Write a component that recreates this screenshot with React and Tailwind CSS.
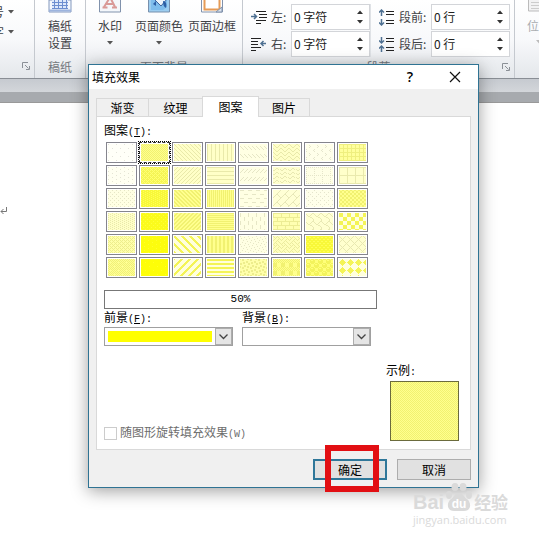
import React, { useState } from "react";

const PATTERNS = [
  ["5%", "8000000008000000"],
  ["50%", "55aa55aa55aa55aa"],
  ["浅色下对角线", "8844221188442211"],
  ["浅色竖线", "8888888888888888"],
  ["下对角虚线", "0000884422110000"],
  ["之字形", "8142241881422418"],
  ["草皮", "0010081000800180"],
  ["小网格", "ff888888ff888888"],
  ["10%", "8000080080000800"],
  ["60%", "77aaddaa77aaddaa"],
  ["浅色上对角线", "1122448811224488"],
  ["浅色横线", "ff000000ff000000"],
  ["上对角虚线", "0000112244880000"],
  ["波浪线", "001825c0001825c0"],
  ["虚线网格", "aa00800080008000"],
  ["大网格", "ff80808080808080"],
  ["20%", "8800220088002200"],
  ["70%", "77dd77dd77dd77dd"],
  ["深色下对角线", "cc663399cc663399"],
  ["窄竖线", "aaaaaaaaaaaaaaaa"],
  ["横虚线", "f00000000f000000"],
  ["对角砖形", "0102040818244281"],
  ["点式菱形", "8000220008002200"],
  ["小棋盘", "9966669999666699"],
  ["25%", "8822882288228822"],
  ["75%", "77ffddff77ffddff"],
  ["深色上对角线", "3366cc993366cc99"],
  ["窄横线", "ff00ff00ff00ff00"],
  ["竖虚线", "8080808008080808"],
  ["横向砖形", "ff808080ff080808"],
  ["瓦形", "038448300c020101"],
  ["大棋盘", "f0f0f0f00f0f0f0f", true],
  ["30%", "aa44aa11aa44aa11"],
  ["80%", "feffeffffeffefff"],
  ["宽下对角线", "c1e070381c0e0783", true],
  ["深色竖线", "cccccccccccccccc"],
  ["小纸屑", "8008400210012004"],
  ["编织物", "8854224588142251"],
  ["棚架", "ff66ff99ff66ff99"],
  ["轮廓式菱形", "8244281028448201"],
  ["40%", "55aa558a55aa55a8"],
  ["90%", "fffffff7ffffff7f"],
  ["宽上对角线", "83070e1c3870e0c1", true],
  ["深色横线", "ffff0000ffff0000", true],
  ["大纸屑", "b130031bd8c00c8d"],
  ["苏格兰方格呢", "aa55aa55f0f0f0f0"],
  ["球体", "77898f8f7798f8f8"],
  ["实心菱形", "10387cfe7c381000", true],
];

// Paints an 8x8 bitmap over the whole area; denser bitmaps get stronger inks.
function Hatch({ bits, width, height, bold }) {
  const rows = [];
  let count = 0;
  for (let y = 0; y < 8; y++) {
    const row = parseInt(bits.slice(y * 2, y * 2 + 2), 16);
    rows.push(row);
    for (let x = 0; x < 8; x++) if (row & (128 >> x)) count++;
  }
  const density = count / 64;
  const ink = bold ? 0.62 : density;
  const paper = bold ? 0.15 : density;
  const level = Math.round(226 + 29 * ink);
  let path = "";
  for (let y = 0; y < height; y++) {
    for (let x = 0; x < width; x++) {
      if (rows[y % 8] & (128 >> x % 8)) path += `M${x} ${y}h1v1h-1z`;
    }
  }
  return (
    <svg width={width} height={height} className="block" aria-hidden="true" shapeRendering="crispEdges">
      <rect width={width} height={height} fill={`rgb(255,255,${Math.round(255 - 226 * paper)})`} />
      <path d={path} fill={`rgb(${level},${level},${Math.round(226 - 226 * ink)})`} />
    </svg>
  );
}

function Caret({ className = "text-[#555]" }) {
  return (
    <svg width="6" height="4" viewBox="0 0 6 4" className={className} aria-hidden="true">
      <path d="M0 0h6L3 3.5z" fill="currentColor" />
    </svg>
  );
}

function Launcher() {
  return (
    <button aria-label="展开对话框" className="text-[#8b9097]">
      <svg width="8" height="8" viewBox="0 0 8 8" fill="none" stroke="currentColor">
        <path d="M.5 6V.5H6M3 3l3.500 3.500M7.500 4v3.500H4" />
      </svg>
    </button>
  );
}

function GridPaperIcon() {
  return (
    <svg width="24" height="13" viewBox="0 0 24 13" aria-hidden="true">
      <path d="M1 0h22v12H1z" fill="#f3f7fd" stroke="#8398bd" />
      <path d="M4 0h16v8H4z" fill="#dce8fb" />
      <path d="M4 2.500h16M4 5.500h16M4 8.500h16M6.500 0v9M10.500 0v9M14.500 0v9M18.500 0v9" stroke="#6c8ed0" />
      <path d="M1 10.500h22" stroke="#9db4de" strokeWidth="2" />
    </svg>
  );
}

function WatermarkIcon() {
  return (
    <svg width="22" height="13" viewBox="0 0 22 13" aria-hidden="true">
      <path d="M.5-1h21v13H.5z" fill="#f4f7fb" stroke="#8192ac" />
      <path d="M5 7L10-1h2l4 8M7 4h7M3.500 7.500h5M13 7.500h5" fill="none" stroke="#d99a98" strokeWidth="2" />
    </svg>
  );
}

function PageColorIcon() {
  return (
    <svg width="22" height="13" viewBox="0 0 22 13" aria-hidden="true">
      <path d="M.5-1h21v13H.5z" fill="#9ccdf0" stroke="#7890ad" />
      <path d="M3 0h16v7l-4 3H3z" fill="#7fbdec" />
      <path d="M6-1l7 7 6-7z" fill="#edf4fb" stroke="#40659c" />
      <path d="M15 1c3 0 4 3 3 7-2-1-3-3-3-7zM5 4l3-3v5z" fill="#2d5fa5" />
    </svg>
  );
}

function PageBorderIcon() {
  return (
    <svg width="22" height="13" viewBox="0 0 22 13" aria-hidden="true">
      <path d="M.5-1h21v13H.5z" fill="#fff" stroke="#8192ac" />
      <path d="M3.500-1v10.500h15V-1" fill="none" stroke="#e69b57" strokeWidth="2" />
      <path d="M15 12l6-5v5z" fill="#dce4ef" stroke="#8192ac" />
    </svg>
  );
}

function IndentIcon({ flip }) {
  return (
    <svg width="16" height="14" viewBox="0 0 16 14" fill="none" aria-hidden="true">
      {flip ? (
        <>
          <path d="M0 1.500h10M0 4.500h7M0 7.500h7M0 10.500h10M0 13.500h5" stroke="#222" />
          <path d="M15 6.500h-5M12.500 4L10 6.500 12.500 9" stroke="#4e7092" strokeWidth="1.500" />
        </>
      ) : (
        <>
          <path d="M5 1.500h10M8 4.500h8M8 7.500h8M5 10.500h10M5 13.500h5" stroke="#222" />
          <path d="M0 6.500h5M3 4l2.500 2.500L3 9" stroke="#4e7092" strokeWidth="1.500" />
        </>
      )}
    </svg>
  );
}

function SpacingIcon({ flip }) {
  return (
    <svg width="16" height="17" viewBox="0 0 16 17" fill="none" aria-hidden="true">
      <path d="M7 2.500h8M7 5.500h8M7 11.500h8M7 14.500h8" stroke="#222" />
      {flip ? (
        <path d="M2.500 1v6M0 4.500L2.500 7 5 4.500M2.500 16v-6M0 12.500L2.500 10 5 12.500" stroke="#4e7092" strokeWidth="1.500" />
      ) : (
        <path d="M2.500 7V1M0 3.500L2.500 1 5 3.500M2.500 10v6M0 13.500L2.500 16 5 13.500" stroke="#4e7092" strokeWidth="1.500" />
      )}
    </svg>
  );
}

function Spinner({ id, label, value, icon, wide }) {
  return (
    <div className="flex h-[26px] items-center">
      {icon}
      <label htmlFor={id} className={wide ? "ml-1 w-8 whitespace-nowrap" : "ml-1 w-5 whitespace-nowrap"}>
        {label}
      </label>
      <div className="flex h-[26px] w-[79px] border border-[#d3d5d9] bg-white">
        <input id={id} defaultValue={value} className="w-0 min-w-0 flex-1 bg-transparent pl-0.5 text-[#222] outline-none" />
        <div className="flex w-[18px] flex-col items-center justify-evenly">
          <button aria-label="增加" className="rotate-180"><Caret className="text-[#333]" /></button>
          <button aria-label="减少"><Caret className="text-[#333]" /></button>
        </div>
      </div>
    </div>
  );
}

function RibbonButton({ icon, label }) {
  return (
    <button className="flex flex-col items-center">
      {icon}
      <span className="mt-1 leading-[17px]">{label}</span>
      <span className="flex h-[17px] items-center"><Caret /></span>
    </button>
  );
}

function Ribbon() {
  return (
    <header className="flex overflow-hidden border-b border-[#898e95] bg-linear-to-b from-white via-[#f8f9fb] to-[#e4e7eb] text-xs leading-4 text-[#3f4246]">
      <section className="flex w-[35px] shrink-0 flex-col border-r border-[#c5c9cf]">
        <div className="-ml-2 flex items-center gap-1 pt-1"><span>号</span><Caret /></div>
        <div className="-ml-2 mt-1 flex items-center gap-1"><span>字</span><Caret /></div>
        <div className="mt-auto flex justify-end pr-1 pb-2"><Launcher /></div>
      </section>
      <section className="flex w-[51px] shrink-0 flex-col items-center border-r border-[#c5c9cf] pb-[3px]">
        <button className="flex flex-col items-center">
          <GridPaperIcon />
          <span className="mt-1 w-6 leading-[17px]">稿纸设置</span>
        </button>
        <div className="mt-2 text-[#75797e]">稿纸</div>
      </section>
      <section className="flex w-[157px] shrink-0 flex-col items-center border-r border-[#c5c9cf] pb-[3px]">
        <div className="flex w-full justify-between pr-1.5 pl-3">
          <RibbonButton icon={<WatermarkIcon />} label="水印" />
          <div className="flex gap-[5px]">
            <RibbonButton icon={<PageColorIcon />} label="页面颜色" />
            <button className="flex flex-col items-center">
              <PageBorderIcon />
              <span className="mt-1 leading-[17px]">页面边框</span>
            </button>
          </div>
        </div>
        <div className="mt-2 text-[#75797e]">页面背景</div>
      </section>
      <section className="flex w-[272px] shrink-0 flex-col border-r border-[#c5c9cf] pb-[3px]">
        <div className="flex justify-between pt-1 pr-1 pl-2">
          <div className="flex flex-col gap-px">
            <Spinner id="left" label="左:" value="0 字符" icon={<IndentIcon />} />
            <Spinner id="right" label="右:" value="0 字符" icon={<IndentIcon flip />} />
          </div>
          <div className="flex flex-col gap-px border-l border-[#dfe2e6] pl-2">
            <Spinner id="before" label="段前:" value="0 行" icon={<SpacingIcon />} wide />
            <Spinner id="after" label="段后:" value="0 行" icon={<SpacingIcon flip />} wide />
          </div>
        </div>
        <div className="mt-0.5 grid grid-cols-[1fr_auto_1fr] items-center text-[#75797e]">
          <span className="col-start-2">段落</span>
          <span className="flex justify-end pr-1"><Launcher /></span>
        </div>
      </section>
      <section className="flex-1 overflow-hidden pl-3">
        <button className="flex flex-col items-center text-[#a9acb0]">
          <svg width="24" height="13" viewBox="0 0 24 13" aria-hidden="true">
            <path d="M1.500-1h21v12h-21z" fill="#f2f2f3" stroke="#bbb" />
            <path d="M4 2.500h16M4 5.500h16M4 8.500h16" stroke="#ccc" />
          </svg>
          <span className="mt-1 leading-[17px] whitespace-nowrap">位置</span>
          <Caret className="mt-1.5 text-[#bbb]" />
        </button>
      </section>
    </header>
  );
}

function Mnemonic({ text, letter }) {
  return (
    <>
      {text}
      <span className="font-['Liberation_Mono',monospace] text-[10px]">
        (<span className="underline">{letter}</span>):
      </span>
    </>
  );
}

function ColorSelect({ id, text, letter, swatch }) {
  return (
    <div className="w-[129px]">
      <label htmlFor={id} className="block leading-[15px]"><Mnemonic text={text} letter={letter} /></label>
      <div className="grid h-[19px] border border-[#a0a0a0] bg-white">
        <select id={id} className="col-start-1 row-start-1 w-full appearance-none bg-transparent text-transparent outline-none">
          <option>{swatch ? "黄色" : "白色"}</option>
        </select>
        <div className="pointer-events-none col-start-1 row-start-1 flex">
          <span className={swatch ? "m-[3px] flex-1 bg-[#ffff00]" : "flex-1"} />
          <span className="flex w-[17px] items-center justify-center border border-[#adadad] bg-[#e5e5e5]">
            <svg width="9" height="6" viewBox="0 0 9 6" fill="none" aria-hidden="true">
              <path d="M.5.5l4 4 4-4" stroke="#444" strokeWidth="1.300" />
            </svg>
          </span>
        </div>
      </div>
    </div>
  );
}

function FillEffectsDialog() {
  const [selected, setSelected] = useState(1);
  const tab = "border border-b-0 border-[#d9d9d9] bg-[#f0f0f0] h-[18px]";
  return (
    <div
      role="dialog"
      aria-labelledby="dialog-title"
      className="absolute top-16 left-[88px] w-[391px] border border-[#2f7393] bg-[#f0f0f0] text-xs leading-4 text-black shadow-[0_3px_16px_rgba(0,0,0,0.38)]"
    >
      <div className="flex h-6 items-center bg-white pr-[17px] pl-[3px]">
        <h1 id="dialog-title" className="flex-1">填充效果</h1>
        <button aria-label="帮助" className="mr-9 font-['Open_Sans',sans-serif] text-sm font-semibold">?</button>
        <button aria-label="关闭">
          <svg width="12" height="12" viewBox="0 0 12 12" fill="none" stroke="#111" strokeWidth="1.200">
            <path d="M1 1l10 10M11 1L1 11" />
          </svg>
        </button>
      </div>
      <div className="p-[7px]">
        <div role="tablist" className="flex items-end">
          <button role="tab" className={`${tab} w-[53px]`}>渐变</button>
          <button role="tab" className={`${tab} w-[53px] border-x-0`}>纹理</button>
          <button role="tab" aria-selected="true" className="z-10 -mb-px h-[21px] w-[57px] border border-b-0 border-[#d9d9d9] bg-white">
            图案
          </button>
          <button role="tab" className={`${tab} w-[51px] border-l-0`}>图片</button>
        </div>
        <div className="border border-[#d9d9d9] bg-white pt-[5px] pr-[11px] pb-2 pl-[7px]">
          <div id="pattern-label"><Mnemonic text="图案" letter="T" /></div>
          <div role="group" aria-labelledby="pattern-label" className="ml-px grid w-[264px] grid-cols-8">
            {PATTERNS.map(([name, bits, bold], i) => (
              <button
                key={name}
                aria-label={name}
                aria-pressed={selected === i}
                onClick={() => setSelected(i)}
                className={
                  selected === i
                    ? "border border-dotted border-black"
                    : "border border-transparent"
                }
              >
                <span
                  className={
                    selected === i
                      ? "block border border-dashed border-[#333] p-px"
                      : "block border border-[#85858d] p-px"
                  }
                >
                  <Hatch bits={bits} bold={bold} width={27} height={17} />
                </span>
              </button>
            ))}
          </div>
          <div className="mt-[11px] h-[19px] w-[273px] border border-[#777] text-center font-['Liberation_Mono',monospace] text-[11px]">
            {PATTERNS[selected][0]}
          </div>
          <div className="flex gap-[9px]">
            <ColorSelect id="foreground" text="前景" letter="F" swatch />
            <ColorSelect id="background" text="背景" letter="B" />
          </div>
          <div className="mt-4 flex items-end justify-between">
            <label className="flex items-center gap-[3px] leading-3 text-[#6d6d6d]">
              <input type="checkbox" disabled className="size-[13px] appearance-none border border-[#ccc] bg-white" />
              <span>随图形旋转填充效果<span className="font-['Liberation_Mono',monospace] text-[10px]">(W)</span></span>
            </label>
            <div>
              <div>示例<span className="font-['Liberation_Mono',monospace] text-[10px]">:</span></div>
              <div className="ml-1 border border-[#6b6b3d]">
                <Hatch bits={PATTERNS[selected][1]} width={67} height={58} />
              </div>
            </div>
          </div>
        </div>
        <div className="mt-[9px] flex justify-end gap-2.5">
          <div className="relative">
            <button className="block h-[21px] w-[74px] border-2 border-[#2f7799] bg-[#e1e1e1]">确定</button>
            <div className="pointer-events-none absolute -top-3.5 left-3 h-[47px] w-[54px] border-6 border-[#e20f13]" />
          </div>
          <button className="h-[21px] w-[74px] border border-[#adadad] bg-[#e1e1e1]">取消</button>
        </div>
      </div>
    </div>
  );
}

function SiteMark() {
  return (
    <div className="absolute top-[482px] left-[413px] flex flex-col text-[#dadada]">
      <div className="flex h-[30px] items-end font-bold">
        <span className="font-['Liberation_Sans',sans-serif] text-xl leading-5">Bai</span>
        <svg width="30" height="30" viewBox="0 0 30 30" fill="#dadada" aria-hidden="true">
          <ellipse cx="5" cy="13" rx="3" ry="4" />
          <ellipse cx="11" cy="5" rx="3.500" ry="4" />
          <ellipse cx="19" cy="5" rx="3.500" ry="4" />
          <ellipse cx="25" cy="13" rx="3" ry="4" />
          <path d="M15 11c-4 0-5 4-8 6-5 4-4 12 3 12h10c7 0 8-8 3-12-3-2-4-6-8-6z" />
          <text x="15" y="26" fontSize="12" fontWeight="700" textAnchor="middle" fill="#fff" fontFamily="Liberation Sans">du</text>
        </svg>
        <span className="text-[17px] leading-5">经验</span>
      </div>
      <span className="mt-0.5 font-['Open_Sans',sans-serif] text-[11px] leading-3">jingyan.baidu.com</span>
    </div>
  );
}

export default function App() {
  return (
    <div className="relative min-h-screen overflow-hidden bg-white font-['Noto_Sans_CJK_SC',sans-serif]">
      <Ribbon />
      <div className="h-[13px] bg-linear-to-b from-[#c6cad0] to-[#d3d6da]" />
      <div className="h-[11px] border-b border-[#999] bg-[#a7aaae]" />
      <main className="pt-[103px]">
        <svg width="8" height="9" viewBox="0 0 8 9" fill="none" stroke="#777" aria-label="段落标记">
          <path d="M6.500 1v4.500H1M3.500 3L1 5.500 3.500 8" />
        </svg>
      </main>
      <FillEffectsDialog />
      <SiteMark />
    </div>
  );
}
